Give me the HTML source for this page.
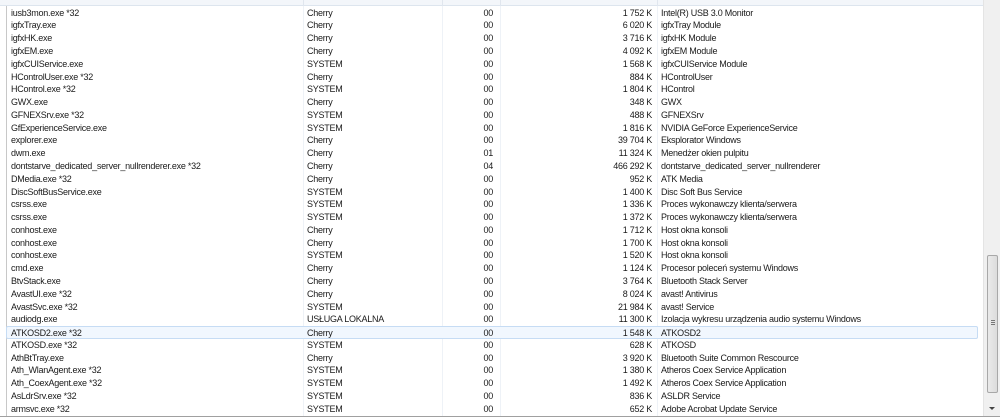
<!DOCTYPE html>
<html><head><meta charset="utf-8"><style>
*{margin:0;padding:0;box-sizing:border-box}
body{width:1000px;height:420px;background:#fff;position:relative;overflow:hidden;font-family:"Liberation Sans",sans-serif;font-size:9px;letter-spacing:-0.25px;color:#1a1a1a}
.hdr{position:absolute;left:0;top:0;width:983px;height:6px;background:#f3f6fa;border-bottom:1px solid #dde5ee}
.hdr span{position:absolute;top:0;height:6px;border-left:1px solid #e0e6ee}
.vl{position:absolute;top:6px;height:410px;border-left:1px solid #eef2f7}
.r{position:absolute;left:6px;width:972px;height:12.78px;line-height:12.78px;white-space:nowrap}
.r div{position:absolute;top:0}
.a{left:5px}.b{left:301px}.c{right:485px}.d{right:326px}.e{left:655px}
.sel{background:#f1f7fe;border:1px solid #c6dcf4;border-radius:2px}
.sb{position:absolute;left:983px;top:0;width:17px;height:417px;background:#f0f0f0;border-left:1px solid #e4e4e4}
.th{position:absolute;left:987px;top:255px;width:11px;height:138px;background:linear-gradient(90deg,#eaeaea,#dcdcdc);border:1px solid #a8a8a8;border-radius:2px}
.bot{position:absolute;left:0;top:416px;width:1000px;height:4px;background:#fff;border-top:1px solid #a0a0a0}
.lb{position:absolute;left:6px;top:6px;height:410px;border-left:1px solid #c8c8c8}
</style></head><body>
<div class="hdr"><span style="left:303px"></span><span style="left:442px"></span><span style="left:500px"></span><span style="left:657px"></span></div>
<div class="vl" style="left:303px"></div><div class="vl" style="left:442px"></div><div class="vl" style="left:500px"></div><div class="vl" style="left:657px"></div>
<div class="lb"></div>
<div class="r" style="top:6.6px"><div class="a">iusb3mon.exe *32</div><div class="b">Cherry</div><div class="c">00</div><div class="d">1 752 K</div><div class="e">Intel(R) USB 3.0 Monitor</div></div>
<div class="r" style="top:19.4px"><div class="a">igfxTray.exe</div><div class="b">Cherry</div><div class="c">00</div><div class="d">6 020 K</div><div class="e">igfxTray Module</div></div>
<div class="r" style="top:32.2px"><div class="a">igfxHK.exe</div><div class="b">Cherry</div><div class="c">00</div><div class="d">3 716 K</div><div class="e">igfxHK Module</div></div>
<div class="r" style="top:45.0px"><div class="a">igfxEM.exe</div><div class="b">Cherry</div><div class="c">00</div><div class="d">4 092 K</div><div class="e">igfxEM Module</div></div>
<div class="r" style="top:57.7px"><div class="a">igfxCUIService.exe</div><div class="b">SYSTEM</div><div class="c">00</div><div class="d">1 568 K</div><div class="e">igfxCUIService Module</div></div>
<div class="r" style="top:70.5px"><div class="a">HControlUser.exe *32</div><div class="b">Cherry</div><div class="c">00</div><div class="d">884 K</div><div class="e">HControlUser</div></div>
<div class="r" style="top:83.3px"><div class="a">HControl.exe *32</div><div class="b">SYSTEM</div><div class="c">00</div><div class="d">1 804 K</div><div class="e">HControl</div></div>
<div class="r" style="top:96.1px"><div class="a">GWX.exe</div><div class="b">Cherry</div><div class="c">00</div><div class="d">348 K</div><div class="e">GWX</div></div>
<div class="r" style="top:108.8px"><div class="a">GFNEXSrv.exe *32</div><div class="b">SYSTEM</div><div class="c">00</div><div class="d">488 K</div><div class="e">GFNEXSrv</div></div>
<div class="r" style="top:121.6px"><div class="a">GfExperienceService.exe</div><div class="b">SYSTEM</div><div class="c">00</div><div class="d">1 816 K</div><div class="e">NVIDIA GeForce ExperienceService</div></div>
<div class="r" style="top:134.4px"><div class="a">explorer.exe</div><div class="b">Cherry</div><div class="c">00</div><div class="d">39 704 K</div><div class="e">Eksplorator Windows</div></div>
<div class="r" style="top:147.2px"><div class="a">dwm.exe</div><div class="b">Cherry</div><div class="c">01</div><div class="d">11 324 K</div><div class="e">Menedżer okien pulpitu</div></div>
<div class="r" style="top:159.9px"><div class="a">dontstarve_dedicated_server_nullrenderer.exe *32</div><div class="b">Cherry</div><div class="c">04</div><div class="d">466 292 K</div><div class="e">dontstarve_dedicated_server_nullrenderer</div></div>
<div class="r" style="top:172.7px"><div class="a">DMedia.exe *32</div><div class="b">Cherry</div><div class="c">00</div><div class="d">952 K</div><div class="e">ATK Media</div></div>
<div class="r" style="top:185.5px"><div class="a">DiscSoftBusService.exe</div><div class="b">SYSTEM</div><div class="c">00</div><div class="d">1 400 K</div><div class="e">Disc Soft Bus Service</div></div>
<div class="r" style="top:198.3px"><div class="a">csrss.exe</div><div class="b">SYSTEM</div><div class="c">00</div><div class="d">1 336 K</div><div class="e">Proces wykonawczy klienta/serwera</div></div>
<div class="r" style="top:211.0px"><div class="a">csrss.exe</div><div class="b">SYSTEM</div><div class="c">00</div><div class="d">1 372 K</div><div class="e">Proces wykonawczy klienta/serwera</div></div>
<div class="r" style="top:223.8px"><div class="a">conhost.exe</div><div class="b">Cherry</div><div class="c">00</div><div class="d">1 712 K</div><div class="e">Host okna konsoli</div></div>
<div class="r" style="top:236.6px"><div class="a">conhost.exe</div><div class="b">Cherry</div><div class="c">00</div><div class="d">1 700 K</div><div class="e">Host okna konsoli</div></div>
<div class="r" style="top:249.4px"><div class="a">conhost.exe</div><div class="b">SYSTEM</div><div class="c">00</div><div class="d">1 520 K</div><div class="e">Host okna konsoli</div></div>
<div class="r" style="top:262.1px"><div class="a">cmd.exe</div><div class="b">Cherry</div><div class="c">00</div><div class="d">1 124 K</div><div class="e">Procesor poleceń systemu Windows</div></div>
<div class="r" style="top:274.9px"><div class="a">BtvStack.exe</div><div class="b">Cherry</div><div class="c">00</div><div class="d">3 764 K</div><div class="e">Bluetooth Stack Server</div></div>
<div class="r" style="top:287.7px"><div class="a">AvastUI.exe *32</div><div class="b">Cherry</div><div class="c">00</div><div class="d">8 024 K</div><div class="e">avast! Antivirus</div></div>
<div class="r" style="top:300.5px"><div class="a">AvastSvc.exe *32</div><div class="b">SYSTEM</div><div class="c">00</div><div class="d">21 984 K</div><div class="e">avast! Service</div></div>
<div class="r" style="top:313.2px"><div class="a">audiodg.exe</div><div class="b">USŁUGA LOKALNA</div><div class="c">00</div><div class="d">11 300 K</div><div class="e">Izolacja wykresu urządzenia audio systemu Windows</div></div>
<div class="r sel" style="top:326.0px"><div class="a" style="left:4px">ATKOSD2.exe *32</div><div class="b" style="left:300px">Cherry</div><div class="c" style="right:484px">00</div><div class="d" style="right:325px">1 548 K</div><div class="e" style="left:654px">ATKOSD2</div></div>
<div class="r" style="top:338.8px"><div class="a">ATKOSD.exe *32</div><div class="b">SYSTEM</div><div class="c">00</div><div class="d">628 K</div><div class="e">ATKOSD</div></div>
<div class="r" style="top:351.6px"><div class="a">AthBtTray.exe</div><div class="b">Cherry</div><div class="c">00</div><div class="d">3 920 K</div><div class="e">Bluetooth Suite Common Rescource</div></div>
<div class="r" style="top:364.3px"><div class="a">Ath_WlanAgent.exe *32</div><div class="b">SYSTEM</div><div class="c">00</div><div class="d">1 380 K</div><div class="e">Atheros Coex Service Application</div></div>
<div class="r" style="top:377.1px"><div class="a">Ath_CoexAgent.exe *32</div><div class="b">SYSTEM</div><div class="c">00</div><div class="d">1 492 K</div><div class="e">Atheros Coex Service Application</div></div>
<div class="r" style="top:389.9px"><div class="a">AsLdrSrv.exe *32</div><div class="b">SYSTEM</div><div class="c">00</div><div class="d">836 K</div><div class="e">ASLDR Service</div></div>
<div class="r" style="top:402.7px"><div class="a">armsvc.exe *32</div><div class="b">SYSTEM</div><div class="c">00</div><div class="d">652 K</div><div class="e">Adobe Acrobat Update Service</div></div>
<div class="sb"></div>
<div class="th"><div style="position:absolute;left:3px;top:64px;width:4px;height:5px;border-top:1px solid #777;border-bottom:1px solid #777"></div><div style="position:absolute;left:3px;top:66px;width:4px;border-top:1px solid #777"></div></div>
<div style="position:absolute;left:989px;top:407px;width:0;height:0;border-left:3px solid transparent;border-right:3px solid transparent;border-top:3px solid #444"></div>
<div class="bot"></div>
</body></html>
